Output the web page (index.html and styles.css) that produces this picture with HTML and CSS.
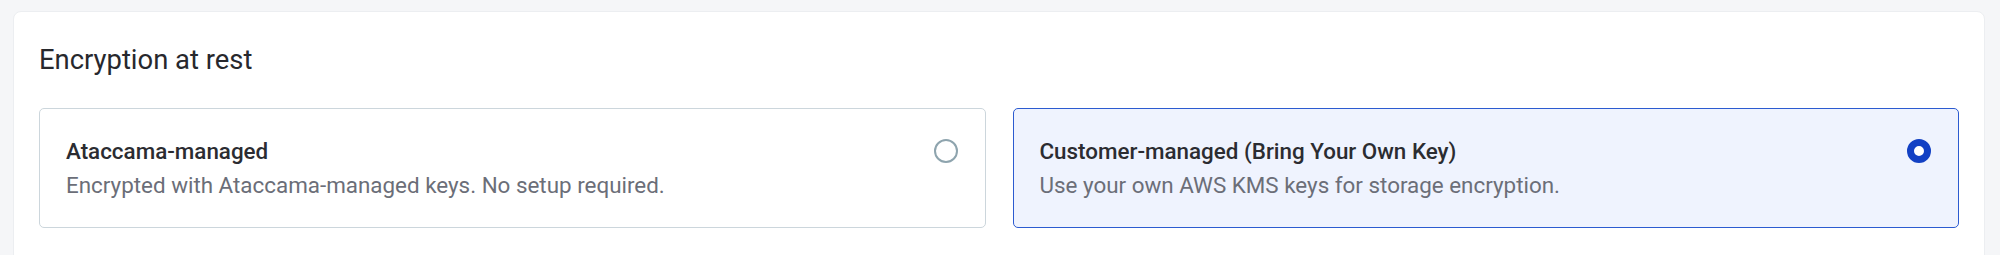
FILE: index.html
```html
<!DOCTYPE html>
<html lang="en">
<head>
<meta charset="utf-8">
<title>Encryption at rest</title>
<link rel="stylesheet" href="styles.css">
</head>
<body>
<div class="page">
  <section class="panel">
    <h2 class="panel-title">Encryption at rest</h2>
    <div class="options">
      <label class="option">
        <div class="option-text">
          <div class="option-title">Ataccama-managed</div>
          <div class="option-desc">Encrypted with Ataccama-managed keys. No setup required.</div>
        </div>
        <span class="radio"></span>
      </label>
      <label class="option option-selected">
        <div class="option-text">
          <div class="option-title">Customer-managed (Bring Your Own Key)</div>
          <div class="option-desc">Use your own AWS KMS keys for storage encryption.</div>
        </div>
        <span class="radio radio-checked"></span>
      </label>
    </div>
  </section>
</div>
</body>
</html>
```

FILE: styles.css
```css
html, body {
  margin: 0;
  padding: 0;
  background: #f5f6f8;
  font-family: Roboto, "Liberation Sans", sans-serif;
}

.page {
  padding: 11px 15px 0 13px;
}

.panel {
  background: #ffffff;
  border: 1px solid #eceef1;
  border-radius: 8px;
  padding: 32px 25px 40px 25px;
}

.panel-title {
  margin: 0 0 32px 0;
  font-size: 27.4px;
  line-height: 32px;
  font-weight: 400;
  color: #27282d;
}

.options {
  display: grid;
  grid-template-columns: 1fr 1fr;
  gap: 27px;
}

.option {
  display: flex;
  align-items: flex-start;
  justify-content: space-between;
  border: 1px solid #ccd6dc;
  border-radius: 5px;
  background: #ffffff;
  padding: 27px 27px 27px 26px;
}

.option-selected {
  border-color: #2c5bd0;
  background: #eff3fe;
}

.option-title {
  font-size: 22.4px;
  line-height: 30px;
  font-weight: 500;
  color: #2b2c31;
}

.option-desc {
  margin-top: 4px;
  font-size: 22.4px;
  line-height: 30px;
  color: #6b6e78;
}

.radio {
  box-sizing: border-box;
  width: 24px;
  height: 24px;
  margin-top: 3px;
  border: 2px solid #8ea4ae;
  border-radius: 50%;
  background: #ffffff;
  flex: none;
}

.radio-checked {
  border: 7px solid #1240c4;
}
```
